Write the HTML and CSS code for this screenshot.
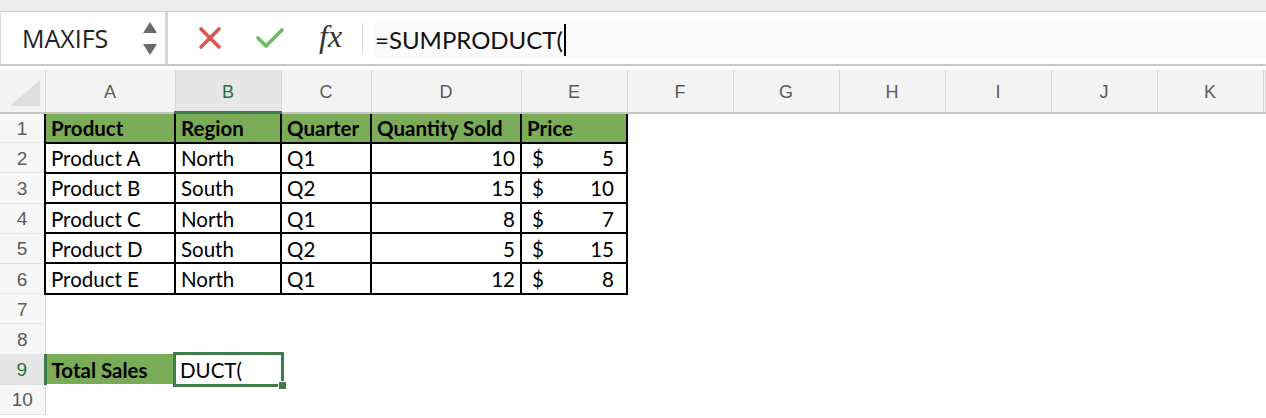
FILE: index.html
```html
<!DOCTYPE html>
<html lang="en">
<head>
    <meta charset="UTF-8">
    <title>Sheet1</title>
    <link rel="stylesheet" href="styles.css">
</head>
<body>
    <div class="top-strip"></div>
    <div class="formula-bar">
        <div class="name-box">
            <span class="name-text">MAXIFS</span>
            <div class="spinner">
                <svg width="14" height="11" viewBox="0 0 14 11"><path d="M7 0L14 11H0Z" fill="#6a6a6a"/></svg>
                <svg width="14" height="11" viewBox="0 0 14 11"><path d="M0 0H14L7 11Z" fill="#6a6a6a"/></svg>
            </div>
        </div>
        <div class="fx-tools">
            <svg class="tool-icon" width="24" height="24" viewBox="0 0 24 24">
                <path d="M3 3L21 21M21 3L3 21" stroke="#d6574f" stroke-width="3.6" stroke-linecap="round"/>
            </svg>
            <svg class="tool-icon" width="30" height="24" viewBox="0 0 30 24">
                <path d="M3 12L11 20L27 4" stroke="#6cbb5f" stroke-width="3.6" stroke-linecap="round" stroke-linejoin="round" fill="none"/>
            </svg>
            <span class="fx">fx</span>
            <div class="divider"></div>
        </div>
        <div class="formula-input">
            <span>=SUMPRODUCT(</span><span class="caret"></span>
        </div>
    </div>

    <table class="sheet">
        <colgroup>
            <col style="width:45px">
            <col style="width:130px">
            <col style="width:106px">
            <col style="width:90px">
            <col style="width:150px">
            <col style="width:106px">
            <col style="width:106px">
            <col style="width:106px">
            <col style="width:106px">
            <col style="width:106px">
            <col style="width:106px">
            <col style="width:106px">
            <col>
        </colgroup>
        <thead>
            <tr class="col-heads">
                <th class="corner"><div class="corner-tri"></div></th>
                <th>A</th>
                <th class="active-col">B</th>
                <th>C</th>
                <th>D</th>
                <th>E</th>
                <th>F</th>
                <th>G</th>
                <th>H</th>
                <th>I</th>
                <th>J</th>
                <th>K</th>
                <th></th>
            </tr>
        </thead>
        <tbody>
            <tr>
                <th class="row-head">1</th>
                <td class="hd">Product</td>
                <td class="hd">Region</td>
                <td class="hd">Quarter</td>
                <td class="hd">Quantity Sold</td>
                <td class="hd">Price</td>
                <td colspan="7"></td>
            </tr>
            <tr>
                <th class="row-head">2</th>
                <td class="bx">Product A</td>
                <td class="bx">North</td>
                <td class="bx">Q1</td>
                <td class="bx num">10</td>
                <td class="bx money"><span>$</span><span>5</span></td>
                <td colspan="7"></td>
            </tr>
            <tr>
                <th class="row-head">3</th>
                <td class="bx">Product B</td>
                <td class="bx">South</td>
                <td class="bx">Q2</td>
                <td class="bx num">15</td>
                <td class="bx money"><span>$</span><span>10</span></td>
                <td colspan="7"></td>
            </tr>
            <tr>
                <th class="row-head">4</th>
                <td class="bx">Product C</td>
                <td class="bx">North</td>
                <td class="bx">Q1</td>
                <td class="bx num">8</td>
                <td class="bx money"><span>$</span><span>7</span></td>
                <td colspan="7"></td>
            </tr>
            <tr>
                <th class="row-head">5</th>
                <td class="bx">Product D</td>
                <td class="bx">South</td>
                <td class="bx">Q2</td>
                <td class="bx num">5</td>
                <td class="bx money"><span>$</span><span>15</span></td>
                <td colspan="7"></td>
            </tr>
            <tr>
                <th class="row-head">6</th>
                <td class="bx">Product E</td>
                <td class="bx">North</td>
                <td class="bx">Q1</td>
                <td class="bx num">12</td>
                <td class="bx money"><span>$</span><span>8</span></td>
                <td colspan="7"></td>
            </tr>
            <tr>
                <th class="row-head">7</th>
                <td colspan="12"></td>
            </tr>
            <tr>
                <th class="row-head">8</th>
                <td colspan="12"></td>
            </tr>
            <tr>
                <th class="row-head active-row">9</th>
                <td class="total">Total Sales</td>
                <td class="selected">
                    <span>DUCT(</span>
                    <div class="sel-frame"><div class="fill-handle"></div></div>
                </td>
                <td colspan="10"></td>
            </tr>
            <tr>
                <th class="row-head">10</th>
                <td colspan="12"></td>
            </tr>
        </tbody>
    </table>
</body>
</html>
```

FILE: styles.css
```css
:root {
    --header-bg: #f3f3f3;
    --grid-line: #d9d9d9;
    --head-text: #5b5b5b;
    --table-green: #7aab56;
    --select-green: #3e7a4c;
    --cell-font: 'Lato', 'Open Sans', sans-serif;
}

body, html {
    margin: 0;
    padding: 0;
    width: 1266px;
    height: 418px;
    overflow: hidden;
    background: #ffffff;
    font-family: 'Liberation Sans', Arial, sans-serif;
}

.top-strip {
    height: 11px;
    background: #ececec;
    border-bottom: 1px solid #cfcfcf;
}

/* formula bar */
.formula-bar {
    display: flex;
    height: 52px;
    border-bottom: 2px solid #c9c9c9;
    background: #ffffff;
}

.name-box {
    width: 168px;
    display: flex;
    align-items: center;
    justify-content: space-between;
    padding: 0 8px 0 21px;
    box-sizing: border-box;
    border-left: 1px solid #dcdcdc;
    border-right: 3px solid #d6d6d6;
    margin-right: 3px;
}

.name-text {
    font-family: 'Open Sans', 'Liberation Sans', sans-serif;
    font-size: 25px;
    color: #222;
}

.spinner {
    display: flex;
    flex-direction: column;
    gap: 11px;
}

.fx-tools {
    display: flex;
    align-items: center;
    width: 204px;
    padding-left: 27px;
    box-sizing: border-box;
}

.tool-icon:first-child {
    width: 24px;
    margin-right: 33px;
}

.tool-icon + .tool-icon {
    margin-right: 34px;
}

.fx {
    font-family: 'Liberation Serif', 'DejaVu Serif', serif;
    font-style: italic;
    font-size: 32px;
    color: #333;
    margin-top: -4px;
}

.divider {
    width: 1px;
    height: 30px;
    background: #d8d8d8;
    margin-left: 20px;
}

.formula-input {
    flex: 1;
    margin: 8px 0 5px 0;
    background: #fafafa;
    display: flex;
    align-items: center;
    font-family: var(--cell-font);
    font-size: 24px;
    color: #111;
}

.caret {
    display: inline-block;
    width: 2px;
    height: 32px;
    background: #000;
    margin-left: 1px;
}

/* grid */
.sheet {
    margin-top: 4px;
    border-collapse: collapse;
    table-layout: fixed;
    width: 1266px;
    font-family: var(--cell-font);
    font-size: 20.5px;
    color: #000;
}

.col-heads th {
    height: 38px;
    padding: 3px 0 0;
    background: var(--header-bg);
    border-right: 1px solid var(--grid-line);
    border-bottom: 2px solid #c4c4c4;
    font-family: 'Liberation Sans', Arial, sans-serif;
    font-weight: normal;
    font-size: 18px;
    color: var(--head-text);
}

.col-heads th.active-col {
    background: #e6e6e6;
    color: #2e6f42;
    border-bottom: 3px solid var(--select-green);
}

.corner-tri {
    width: 0;
    height: 0;
    margin: 1px 0 0 10px;
    border-left: 30px solid transparent;
    border-bottom: 26px solid #dedede;
}

.sheet tbody tr {
    height: 30.2px;
}

.sheet td {
    padding: 1px 5px 0;
    white-space: nowrap;
    overflow: visible;
}

.row-head {
    background: #f7f7f7;
    border-right: 1px solid #cfcfcf;
    border-bottom: 1px solid #e6e6e6;
    font-family: 'Liberation Sans', Arial, sans-serif;
    font-weight: normal;
    font-size: 19px;
    color: var(--head-text);
    padding: 2px 0 0;
}

.row-head.active-row {
    background: #e6e6e6;
    color: #2e6f42;
    border-right: 3px solid var(--select-green);
}

.hd {
    background: var(--table-green);
    font-weight: 700;
    border: 2px solid #000;
}

.bx {
    border: 2px solid #000;
}

.num {
    text-align: right;
}

.money {
    padding: 1px 12px 0 10px !important;
}

.money span:first-child {
    float: left;
}

.money span:last-child {
    float: right;
}

.total {
    background: var(--table-green);
    font-weight: 700;
}

.selected {
    position: relative;
}

.sel-frame {
    position: absolute;
    top: -2px;
    left: -2px;
    right: -3px;
    bottom: -3px;
    border: 3px solid var(--select-green);
}

.fill-handle {
    position: absolute;
    right: -6px;
    bottom: -6px;
    width: 7px;
    height: 7px;
    background: var(--select-green);
    border: 1px solid #fff;
}
```
